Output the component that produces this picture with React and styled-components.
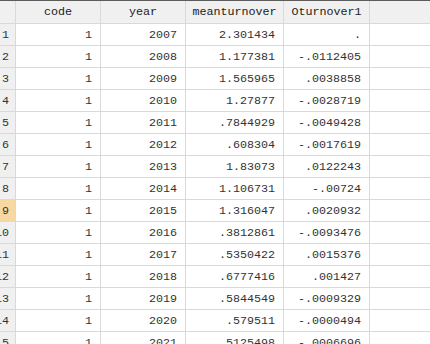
import React from 'react'
import styled, { createGlobalStyle } from 'styled-components'

const Global = createGlobalStyle`
  html, body { margin: 0; padding: 0; background: #fff; }
  body { overflow: hidden; }
`

const rows = [
  [2007, '2.301434', '.'],
  [2008, '1.177381', '-.0112405'],
  [2009, '1.565965', '.0038858'],
  [2010, '1.27877', '-.0028719'],
  [2011, '.7844929', '-.0049428'],
  [2012, '.608304', '-.0017619'],
  [2013, '1.83073', '.0122243'],
  [2014, '1.106731', '-.00724'],
  [2015, '1.316047', '.0020932'],
  [2016, '.3812861', '-.0093476'],
  [2017, '.5350422', '.0015376'],
  [2018, '.6777416', '.001427'],
  [2019, '.5844549', '-.0009329'],
  [2020, '.579511', '-.0000494'],
  [2021, '.5125498', '-.0006696'],
]

const Viewport = styled.div`
  width: 430px;
  height: 344px;
  overflow: hidden;
  border-top: 1px solid #5c5c5c;
  box-sizing: border-box;
`

const Grid = styled.div`
  display: grid;
  grid-template-columns: 31px 85px 85px 98px 86px 1fr;
  margin-left: -15px;
  font-family: "Liberation Mono", "Courier New", monospace;
  font-size: 11.7px;
  color: #333;
`

const Cell = styled.div`
  height: ${p => (p.$head ? 22 : 21)}px;
  display: flex;
  align-items: center;
  justify-content: ${p => (p.$head ? 'center' : 'flex-end')};
  padding: 0 ${p => (p.$num ? 6 : 8)}px 0 0;
  ${p => p.$head && 'padding: 0;'}
  border-right: 1px solid #d9d9d9;
  border-bottom: 1px solid #d9d9d9;
  background: ${p => (p.$sel ? '#f6d9a2' : p.$head || p.$num ? '#f0f0f0' : '#fff')};
  color: ${p => (p.$head ? '#222' : '#333')};
  white-space: nowrap;
`

const Filler = styled.div`
  height: ${p => (p.$head ? 22 : 21)}px;
  border-bottom: 1px solid #d9d9d9;
  background: ${p => (p.$head ? '#f0f0f0' : '#fff')};
`

export default function App() {
  return (
    <Viewport>
      <Global />
      <Grid>
        <Cell $head />
        <Cell $head>code</Cell>
        <Cell $head>year</Cell>
        <Cell $head>meanturnover</Cell>
        <Cell $head>Oturnover1</Cell>
        <Filler $head />
        {rows.map(([year, mean, o], i) => (
          <React.Fragment key={year}>
            <Cell $num $sel={i === 8}>{i + 1}</Cell>
            <Cell>1</Cell>
            <Cell>{year}</Cell>
            <Cell>{mean}</Cell>
            <Cell>{o}</Cell>
            <Filler />
          </React.Fragment>
        ))}
      </Grid>
    </Viewport>
  )
}
